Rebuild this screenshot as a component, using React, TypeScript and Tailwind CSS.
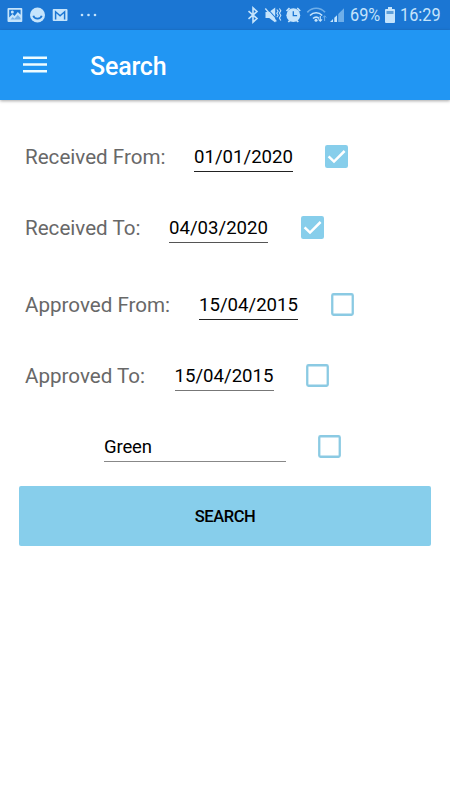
import React from "react";

const rows = [
  { label: "Received From:", date: "01/01/2020", checked: true, width: "w-[169px]", margin: "", line: "border-[#222]", gap: "ml-[32px]" },
  { label: "Received To:", date: "04/03/2020", checked: true, width: "w-[144px]", margin: "", line: "border-[#555]", gap: "ml-[32.5px]" },
  { label: "Approved From:", date: "15/04/2015", checked: false, width: "w-[174px]", margin: "mt-[6px]", line: "border-[#222]", gap: "ml-[32.5px]" },
  { label: "Approved To:", date: "15/04/2015", checked: false, width: "w-[149.5px]", margin: "", line: "border-[#777]", gap: "ml-[32px]" },
];

const Checkbox: React.FC<{ checked?: boolean }> = ({ checked }) => (
  <svg className="h-[23px] w-[23px] shrink-0" viewBox="0 0 23 23" fill="none">
    {checked ? (
      <>
        <rect width="23" height="23" rx="2.2" fill="#87ceeb" />
        <path d="M3.6 11.4 9 16.6 19.6 6" stroke="#fff" strokeWidth="2.5" />
      </>
    ) : (
      <rect x="1.25" y="1.25" width="20.5" height="20.5" rx="1.3" stroke="#8bcae3" strokeWidth="2.3" />
    )}
  </svg>
);

const StatusBar: React.FC = () => (
  <div className="flex h-[30px] items-center bg-[#1b76d3] text-[#c5e4fc]">
    <svg className="h-[30px] w-[110px]" viewBox="0 0 110 30" fill="none">
      <rect x="7.5" y="8" width="14.8" height="14" rx="1" fill="#c5e4fc" />
      <path d="M9.2 9.8h11.4v5L17.8 12l-3.3 4-2-2-3.3 3.6z" fill="#1b76d3" />
      <path d="m10.5 19.5 2.2-2.4 1.7 1.6 3.4-3.6 2.8 2.9v1.5z" fill="#1b76d3" fillOpacity="0.45" />
      <circle cx="12.3" cy="12" r="1.5" fill="#c5e4fc" />
      <circle cx="37.5" cy="15" r="7.5" fill="#c5e4fc" />
      <path d="M33.3 15.8c1.2 3.8 7.2 3.8 8.4 0" stroke="#1b76d3" strokeWidth="1.8" />
      <rect x="52.7" y="9" width="14.8" height="12" rx="1" fill="#c5e4fc" />
      <path d="M55.6 19.4v-7.6l4.5 4 4.5-4v7.6" stroke="#1b76d3" strokeWidth="1.5" />
      <g fill="#c5e4fc">
        <circle cx="82" cy="15" r="1.3" />
        <circle cx="88.5" cy="15" r="1.3" />
        <circle cx="95" cy="15" r="1.3" />
      </g>
    </svg>
    <svg className="ml-[130px] h-[30px] w-[107px]" viewBox="240 0 107 30" fill="none">
      <path d="m248.5 11.2 8.5 7.3-4 3.7V7.8l4 3.7-8.5 7.3" stroke="#c5e4fc" strokeWidth="1.6" />
      <path d="M265.5 12h3.7l6-4.5v15l-6-4.5h-3.7z" fill="#c5e4fc" />
      <path d="m266.5 7.5 11 12.5" stroke="#1b76d3" strokeWidth="1.1" />
      <path d="m265.3 8.5 11 13" stroke="#c5e4fc" strokeWidth="1.4" />
      <path d="m276.8 9.5 1.3 1.8-1.3 2 1.3 2-1.3 2M279.4 8.5l1.4 2.2-1.4 2.4 1.4 2.4-1.4 2.4 1.4 2.6" stroke="#c5e4fc" strokeWidth="1.1" />
      <circle cx="293.3" cy="15.2" r="6.9" fill="#c5e4fc" />
      <path d="m286.5 11 3-3M297.2 8l3 3M288.3 22l1.7-1.7M298.3 22l-1.7-1.7" stroke="#c5e4fc" strokeWidth="1.7" />
      <path d="M293.3 11.3v4.4h3.8" stroke="#1b76d3" strokeWidth="1.3" />
      <path d="M307.3 12.3c5-5.4 12.8-5.4 17.7 0" stroke="#6eaee9" strokeWidth="1.7" />
      <path d="M310 15.5c3.5-3.6 8.7-3.6 12.2 0M313 18.5c2-1.9 4.5-1.9 6 0" stroke="#c5e4fc" strokeWidth="1.6" />
      <circle cx="316" cy="20.3" r="1.5" fill="#c5e4fc" />
      <path d="M320.3 16v5m-1.8-1.7 1.8 1.9 1.8-1.9" stroke="#c5e4fc" strokeWidth="1.1" />
      <path d="M324.6 21v-5m-1.6 1.5 1.6-1.8 1.6 1.8" stroke="#6eaee9" strokeWidth="1" />
      <path d="m330 22 3-3v3zM334.3 22v-4.2l2.7-2.6V22z" fill="#c5e4fc" />
      <path d="M338.2 22v-8l5.8-5.8V22z" fill="#6eaee9" />
    </svg>
    <span className="ml-[3px] w-[30px] origin-left scale-x-[0.88] pt-[2px] text-[18.5px] whitespace-nowrap">69%</span>
    <svg className="ml-[5px] h-[16px] w-[10px]" viewBox="0 0 10 16">
      <path d="M3 0h4v2h2q1 0 1 1v12q0 1-1 1H1q-1 0-1-1V3q0-1 1-1h2z" fill="#c5e4fc" />
      <path d="M1.5 4h7v3h-7z" fill="#5e9fd9" />
    </svg>
    <span className="ml-[5px] origin-left scale-x-[0.88] pt-[2px] text-[18.5px] whitespace-nowrap">16:29</span>
  </div>
);

const App: React.FC = () => {
  return (
    <div className="h-[800px] w-[450px] overflow-hidden bg-white font-['Roboto',sans-serif]">
      <StatusBar />
      <header className="flex h-[70px] items-center bg-[#2196f3] pl-[23px] text-white shadow-[0_1px_3px_rgba(0,0,0,0.35)]">
        <svg className="h-[18px] w-[24px]" viewBox="0 0 24 18" fill="#effcff">
          <path d="M0 .4h24v2.6H0zM0 7.2h24v2.6H0zM0 14h24v2.6H0z" />
        </svg>
        <h1 className="ml-[43px] pt-[4px] text-[25px] font-medium tracking-[-0.2px]">Search</h1>
      </header>
      <main className="pt-[21px]">
        {rows.map((row) => (
          <div key={row.label} className={`flex h-[71px] items-center pl-[25px] ${row.margin}`}>
            <span className={`${row.width} shrink-0 pt-[2px] text-[20.6px] whitespace-nowrap text-[#686868]`}>{row.label}</span>
            <span className={`mt-[1px] h-[30px] w-[99px] border-b text-[18.6px] leading-[30px] whitespace-nowrap text-black ${row.line}`}>{row.date}</span>
            <div className={row.gap}>
              <Checkbox checked={row.checked} />
            </div>
          </div>
        ))}
        <div className="flex h-[71px] items-center pl-[104px]">
          <span className="h-[30px] w-[182px] border-b-[1.5px] border-[#888] text-[18.5px] leading-[30px] tracking-[-0.15px] text-black">Green</span>
          <div className="ml-[32px]">
            <Checkbox />
          </div>
        </div>
        <button className="mx-[19px] mt-[4px] h-[59.5px] w-[412px] rounded-[2px] bg-[#87ceeb] pt-[3px] text-[16.5px] font-medium tracking-[-0.4px] text-black">SEARCH</button>
      </main>
    </div>
  );
};

export default App;
